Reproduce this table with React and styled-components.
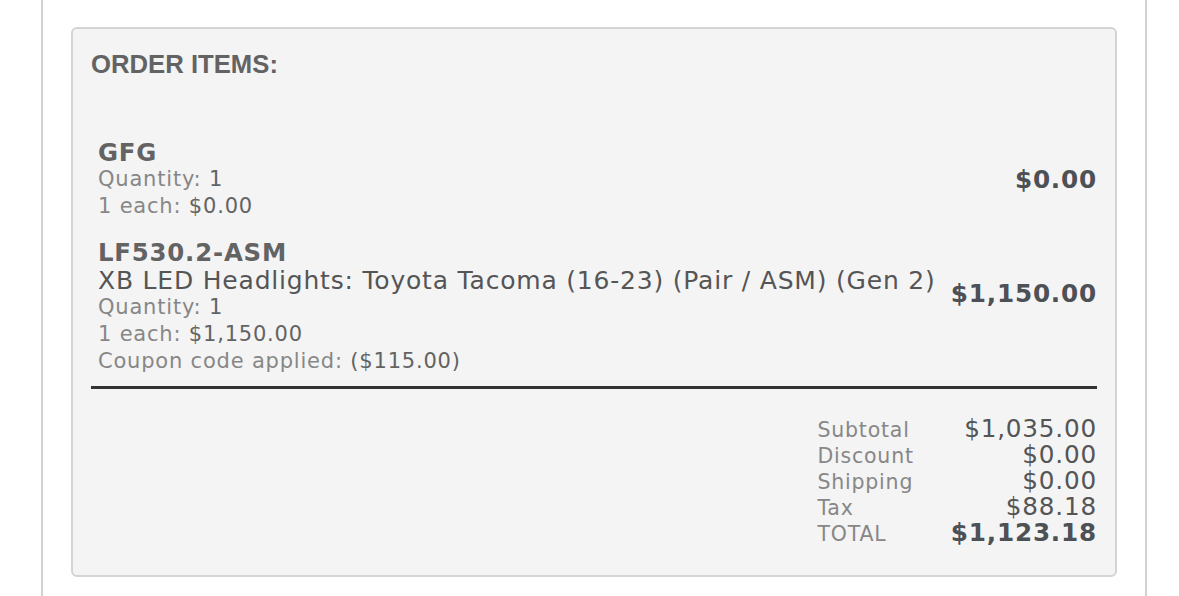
import styled, { createGlobalStyle } from "styled-components";

const GlobalStyle = createGlobalStyle`
  html, body {
    margin: 0;
    padding: 0;
    background: #ffffff;
  }
  * {
    box-sizing: border-box;
  }
`;

const Page = styled.div`
  margin-left: 41px;
  width: 1106px;
  min-height: 100vh;
  padding: 27px 28px 28px;
  border-left: 2px solid #d2d2d2;
  border-right: 2px solid #d2d2d2;
  background: #ffffff;
`;

const Panel = styled.div`
  background: #f4f4f4;
  border: 2px solid #d4d4d4;
  border-radius: 6px;
  padding: 20px 18px 29px;
`;

const Heading = styled.h2`
  margin: 0 0 60px;
  font-family: "Liberation Sans", Arial, sans-serif;
  font-size: 25.7px;
  line-height: 30px;
  font-weight: 700;
  color: #636363;
`;

const ItemList = styled.div`
  display: flex;
  flex-direction: column;
  gap: 19px;
  padding-left: 7px;
  margin-bottom: 11px;
  font-family: "DejaVu Sans", Verdana, sans-serif;
  letter-spacing: 0.05em;
`;

const ItemRow = styled.div`
  display: flex;
  align-items: center;
  justify-content: space-between;
  gap: 12px;
`;

const ItemInfo = styled.div`
  display: flex;
  flex-direction: column;
`;

const Name = styled.div`
  font-size: 24.4px;
  line-height: 27px;
  font-weight: 700;
  color: #636363;
`;

const Desc = styled.div`
  font-size: 25px;
  line-height: 27px;
  padding-top: 1px;
  color: #555555;
`;

const Detail = styled.div`
  font-size: 21px;
  line-height: 27px;
  color: #878787;
`;

const DetailValue = styled.span`
  color: #636363;
`;

const Price = styled.div`
  font-size: 24.7px;
  font-weight: 700;
  color: #4d5055;
  white-space: nowrap;
`;

const Divider = styled.hr`
  margin: 0;
  border: none;
  height: 3px;
  background: #333333;
`;

const Totals = styled.div`
  display: grid;
  grid-template-columns: auto auto;
  grid-auto-rows: 26px;
  justify-content: end;
  align-items: start;
  column-gap: 37px;
  margin-top: 27px;
  font-family: "DejaVu Sans", Verdana, sans-serif;
  letter-spacing: 0.05em;
`;

const TotalLabel = styled.div`
  font-size: 20.5px;
  line-height: 26px;
  padding-top: 1px;
  height: 26px;
  color: #878787;
`;

const TotalValue = styled.div`
  font-size: 24.7px;
  line-height: 26px;
  text-align: right;
  color: ${(p) => (p.$strong ? "#4d5055" : "#555555")};
  font-weight: ${(p) => (p.$strong ? 700 : 400)};
`;

const items = [
  {
    id: 1,
    name: "GFG",
    qty: "1",
    each: "$0.00",
    price: "$0.00",
  },
  {
    id: 2,
    name: "LF530.2-ASM",
    desc: "XB LED Headlights: Toyota Tacoma (16-23) (Pair / ASM) (Gen 2)",
    qty: "1",
    each: "$1,150.00",
    price: "$1,150.00",
    coupon: "($115.00)",
  },
];

const totals = [
  { label: "Subtotal", value: "$1,035.00" },
  { label: "Discount", value: "$0.00" },
  { label: "Shipping", value: "$0.00" },
  { label: "Tax", value: "$88.18" },
  { label: "TOTAL", value: "$1,123.18", strong: true },
];

const App = () => {
  return (
    <>
      <GlobalStyle />
      <Page>
        <Panel>
          <Heading>ORDER ITEMS:</Heading>
          <ItemList>
            {items.map((item) => (
              <div key={item.id}>
                <ItemRow>
                  <ItemInfo>
                    <Name>{item.name}</Name>
                    {item.desc && <Desc>{item.desc}</Desc>}
                    <Detail>
                      Quantity: <DetailValue>{item.qty}</DetailValue>
                    </Detail>
                    <Detail>
                      1 each: <DetailValue>{item.each}</DetailValue>
                    </Detail>
                  </ItemInfo>
                  <Price>{item.price}</Price>
                </ItemRow>
                {item.coupon && (
                  <Detail>
                    Coupon code applied: <DetailValue>{item.coupon}</DetailValue>
                  </Detail>
                )}
              </div>
            ))}
          </ItemList>
          <Divider />
          <Totals>
            {totals.map((t) => [
              <TotalLabel key={t.label + "-l"}>{t.label}</TotalLabel>,
              <TotalValue key={t.label + "-v"} $strong={t.strong}>
                {t.value}
              </TotalValue>,
            ])}
          </Totals>
        </Panel>
      </Page>
    </>
  );
};

export default App;
